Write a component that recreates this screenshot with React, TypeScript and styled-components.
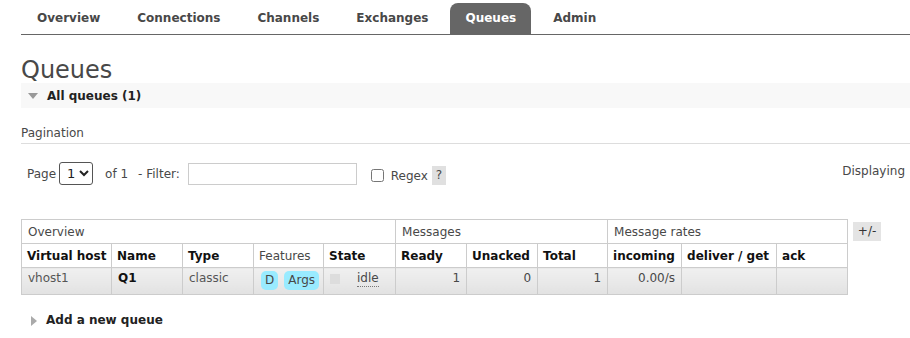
import { createGlobalStyle, styled } from 'styled-components';

const GlobalStyle = createGlobalStyle`
  html, body {
    margin: 0;
    padding: 0;
    background: #fff;
    overflow: hidden;
  }
  body {
    font: 12px 'DejaVu Sans', Verdana, sans-serif;
    color: #484848;
  }
`;

const tabs = ['Overview', 'Connections', 'Channels', 'Exchanges', 'Queues', 'Admin'];

interface Column {
  label: string;
  bold?: boolean;
  width: number;
}

const columns: Column[] = [
  { label: 'Virtual host', bold: true, width: 90 },
  { label: 'Name', bold: true, width: 71 },
  { label: 'Type', bold: true, width: 71 },
  { label: 'Features', width: 70 },
  { label: 'State', bold: true, width: 72 },
  { label: 'Ready', bold: true, width: 71 },
  { label: 'Unacked', bold: true, width: 71 },
  { label: 'Total', bold: true, width: 70 },
  { label: 'incoming', bold: true, width: 74 },
  { label: 'deliver / get', bold: true, width: 95 },
  { label: 'ack', bold: true, width: 71 },
];

export default function App() {
  return (
    <Page>
      <GlobalStyle />
      <Menu>
        {tabs.map((t) => (
          <Tab key={t} $selected={t === 'Queues'}>
            {t}
          </Tab>
        ))}
      </Menu>

      <Title>Queues</Title>
      <SectionBar>
        <Triangle $dir='down' />
        All queues (1)
      </SectionBar>

      <SubHeading>Pagination</SubHeading>
      <PagerRow>
        <PagerLeft>
          <span>Page</span>
          <PageSelect defaultValue='1'>
            <option value='1'>1</option>
          </PageSelect>
          <OfLabel>of 1</OfLabel>
          <span>- Filter:</span>
          <FilterInput type='text' />
          <Check type='checkbox' />
          <RegexLabel>Regex</RegexLabel>
          <Help>?</Help>
        </PagerLeft>
        <Displaying>Displaying</Displaying>
      </PagerRow>

      <TableRow>
        <List>
          <colgroup>
            {columns.map((c) => (
              <col key={c.label} style={{ width: c.width }} />
            ))}
          </colgroup>
          <thead>
            <tr>
              <GroupTh colSpan={5}>Overview</GroupTh>
              <GroupTh colSpan={3}>Messages</GroupTh>
              <GroupTh colSpan={3}>Message rates</GroupTh>
            </tr>
            <tr>
              {columns.map((c) => (
                <ColTh key={c.label} $bold={c.bold}>
                  {c.label}
                </ColTh>
              ))}
            </tr>
          </thead>
          <tbody>
            <tr>
              <Td $muted>vhost1</Td>
              <Td $strong>Q1</Td>
              <Td $muted>classic</Td>
              <Td>
                <Badge>D</Badge>
                <Badge>Args</Badge>
              </Td>
              <Td>
                <StateBox>
                  <ColourKey />
                  <Abbr>idle</Abbr>
                </StateBox>
              </Td>
              <Td $num>1</Td>
              <Td $num>0</Td>
              <Td $num>1</Td>
              <Td $num>0.00/s</Td>
              <Td />
              <Td />
            </tr>
          </tbody>
        </List>
        <ToggleButton>+/-</ToggleButton>
      </TableRow>

      <SectionLink>
        <Triangle $dir='right' />
        Add a new queue
      </SectionLink>
    </Page>
  );
}

const Page = styled.div`
  padding-left: 21px;
  width: 889px;
`;

const Menu = styled.ul`
  display: flex;
  gap: 7px;
  margin: 0;
  padding: 3px 0 0 1px;
  list-style: none;
  border-bottom: 1px solid #666;
`;

const Tab = styled.li<{ $selected?: boolean }>`
  height: 31px;
  line-height: 31px;
  padding: 0 15px;
  font-weight: bold;
  color: ${(p) => (p.$selected ? '#fff' : '#484848')};
  background: ${(p) => (p.$selected ? '#666' : 'transparent')};
  border-radius: 8px 8px 0 0;
`;

const Title = styled.h1`
  margin: 22px 0 0;
  font-size: 24px;
  line-height: 26px;
  font-weight: normal;
  color: #484848;
`;

const SectionBar = styled.div`
  display: flex;
  align-items: center;
  height: 25px;
  background: #f8f8f8;
  font-weight: bold;
  color: #222;
`;

const Triangle = styled.span<{ $dir: 'down' | 'right' }>`
  display: inline-block;
  width: 0;
  height: 0;
  border-style: solid;
  ${(p) =>
    p.$dir === 'down'
      ? `border-width: 6px 5px 0 5px;
         border-color: #999 transparent transparent transparent;
         margin: 0 9px 0 7px;`
      : `border-width: 5px 0 5px 6px;
         border-color: transparent transparent transparent #aaa;
         margin: 0 9px 0 10px;`}
`;

const SubHeading = styled.div`
  margin-top: 18px;
  line-height: 15px;
  padding-bottom: 2px;
  border-bottom: 1px solid #ddd;
`;

const PagerRow = styled.div`
  display: flex;
  justify-content: space-between;
  align-items: flex-start;
  margin-top: 18px;
  padding-left: 6px;
  padding-right: 5px;
`;

const PagerLeft = styled.div`
  display: flex;
  align-items: center;
  height: 23px;
`;

const PageSelect = styled.select`
  margin-left: 3px;
  width: 34px;
  height: 23px;
  font: 13px 'DejaVu Sans', Verdana, sans-serif;
  color: #222;
  border: 1px solid #555;
  border-radius: 3px;
  background: #fff;
  padding: 0 0 0 3px;
`;

const OfLabel = styled.span`
  margin: 0 10px 0 12px;
`;

const FilterInput = styled.input`
  box-sizing: border-box;
  margin-left: 8px;
  width: 169px;
  height: 22px;
  border: 1px solid #ccc;
  padding: 0 3px;
`;

const Check = styled.input`
  width: 13px;
  height: 13px;
  margin: 3px 7px 0 14px;
`;

const RegexLabel = styled.span`
  margin-top: 4px;
`;

const Help = styled.span`
  display: inline-block;
  margin: 4px 0 0 4px;
  width: 14px;
  height: 19px;
  line-height: 19px;
  text-align: center;
  background: #e0e0e0;
  color: #484848;
`;

const Displaying = styled.span`
  margin-top: 2px;
`;

const TableRow = styled.div`
  display: flex;
  align-items: flex-start;
  margin-top: 34px;
`;

const List = styled.table`
  width: 827px;
  border-collapse: collapse;
  table-layout: fixed;
`;

const GroupTh = styled.th`
  height: 23px;
  padding: 0 6px;
  border: 1px solid #ccc;
  text-align: left;
  font-weight: normal;
  color: #484848;
`;

const ColTh = styled.th<{ $bold?: boolean }>`
  height: 23px;
  padding: 0 5px;
  border: 1px solid #ccc;
  text-align: left;
  white-space: nowrap;
  overflow: visible;
  font-weight: ${(p) => (p.$bold ? 'bold' : 'normal')};
  color: ${(p) => (p.$bold ? '#111' : '#484848')};
`;

const Td = styled.td<{ $muted?: boolean; $strong?: boolean; $num?: boolean }>`
  height: 19px;
  padding: 3px 6px 4px;
  vertical-align: top;
  line-height: 15px;
  border: 1px solid #ccc;
  background: linear-gradient(#f0f0f0, #e2e2e2);
  white-space: nowrap;
  text-align: ${(p) => (p.$num ? 'right' : 'left')};
  font-weight: ${(p) => (p.$strong ? 'bold' : 'normal')};
  color: ${(p) => (p.$strong ? '#111' : p.$muted ? '#555' : '#484848')};
`;

const Badge = styled.span`
  display: inline-block;
  height: 19px;
  line-height: 19px;
  padding: 0 4px;
  margin: 0 5px 0 1px;
  border-radius: 5px;
  background: #99ebff;
  color: #484848;
`;

const StateBox = styled.div`
  display: flex;
  align-items: flex-start;
`;

const ColourKey = styled.span`
  display: inline-block;
  width: 10px;
  height: 10px;
  margin: 3px 17px 0 0;
  background: #ddd;
`;

const Abbr = styled.abbr`
  text-decoration: none;
  border-bottom: 1px dotted #777;
  line-height: 15px;
`;

const ToggleButton = styled.span`
  margin: 3px 0 0 5px;
  width: 28px;
  height: 19px;
  line-height: 19px;
  text-align: center;
  background: #e4e4e4;
  color: #333;
`;

const SectionLink = styled.div`
  display: flex;
  align-items: center;
  margin-top: 18px;
  line-height: 15px;
  font-weight: bold;
  color: #222;
`;
